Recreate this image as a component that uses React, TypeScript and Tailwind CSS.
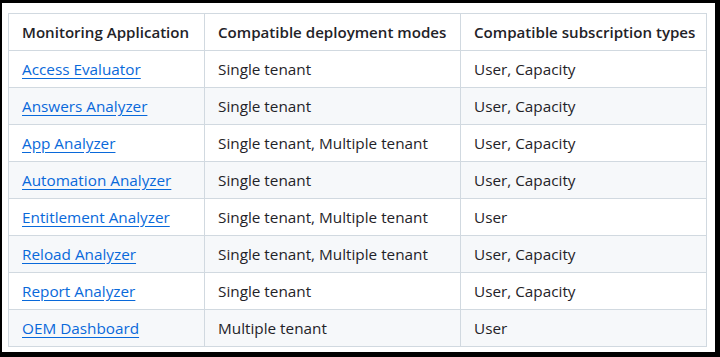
import React from "react";

const rows: [string, string, string][] = [
  ["Access Evaluator", "Single tenant", "User, Capacity"],
  ["Answers Analyzer", "Single tenant", "User, Capacity"],
  ["App Analyzer", "Single tenant, Multiple tenant", "User, Capacity"],
  ["Automation Analyzer", "Single tenant", "User, Capacity"],
  ["Entitlement Analyzer", "Single tenant, Multiple tenant", "User"],
  ["Reload Analyzer", "Single tenant, Multiple tenant", "User, Capacity"],
  ["Report Analyzer", "Single tenant", "User, Capacity"],
  ["OEM Dashboard", "Multiple tenant", "User"],
];

export default function App() {
  return (
    <div className="w-[720px] h-[357px] bg-black pt-[3px] pl-[2px] pr-[5px] pb-[5px]">
      <div
        className="h-full bg-white pt-[10px] pl-[6px] pr-[9px] text-[15.3px] text-[#1f2328]"
        style={{ fontFamily: '"Segoe UI", "Open Sans", "Noto Sans", sans-serif' }}
      >
        <table className="w-[698px] border-collapse table-fixed">
          <colgroup>
            <col className="w-[196px]" />
            <col className="w-[256px]" />
            <col className="w-[246px]" />
          </colgroup>
          <thead>
            <tr className="bg-white">
              {["Monitoring Application", "Compatible deployment modes", "Compatible subscription types"].map((h) => (
                <th
                  key={h}
                  className="border border-[#d1d9e0] px-[13px] h-[37px] text-left text-[15.1px] font-semibold whitespace-nowrap"
                >
                  {h}
                </th>
              ))}
            </tr>
          </thead>
          <tbody>
            {rows.map((r, i) => (
              <tr key={r[0]} className={i % 2 === 1 ? "bg-[#f6f8fa]" : "bg-white"}>
                <td className="border border-[#d1d9e0] px-[13px] h-[37px] whitespace-nowrap">
                  <a href="#" className="text-[#0969da] underline underline-offset-[3px]">
                    {r[0]}
                  </a>
                </td>
                <td className="border border-[#d1d9e0] px-[13px] h-[37px] whitespace-nowrap">{r[1]}</td>
                <td className="border border-[#d1d9e0] px-[13px] h-[37px] whitespace-nowrap">{r[2]}</td>
              </tr>
            ))}
          </tbody>
        </table>
      </div>
    </div>
  );
}
